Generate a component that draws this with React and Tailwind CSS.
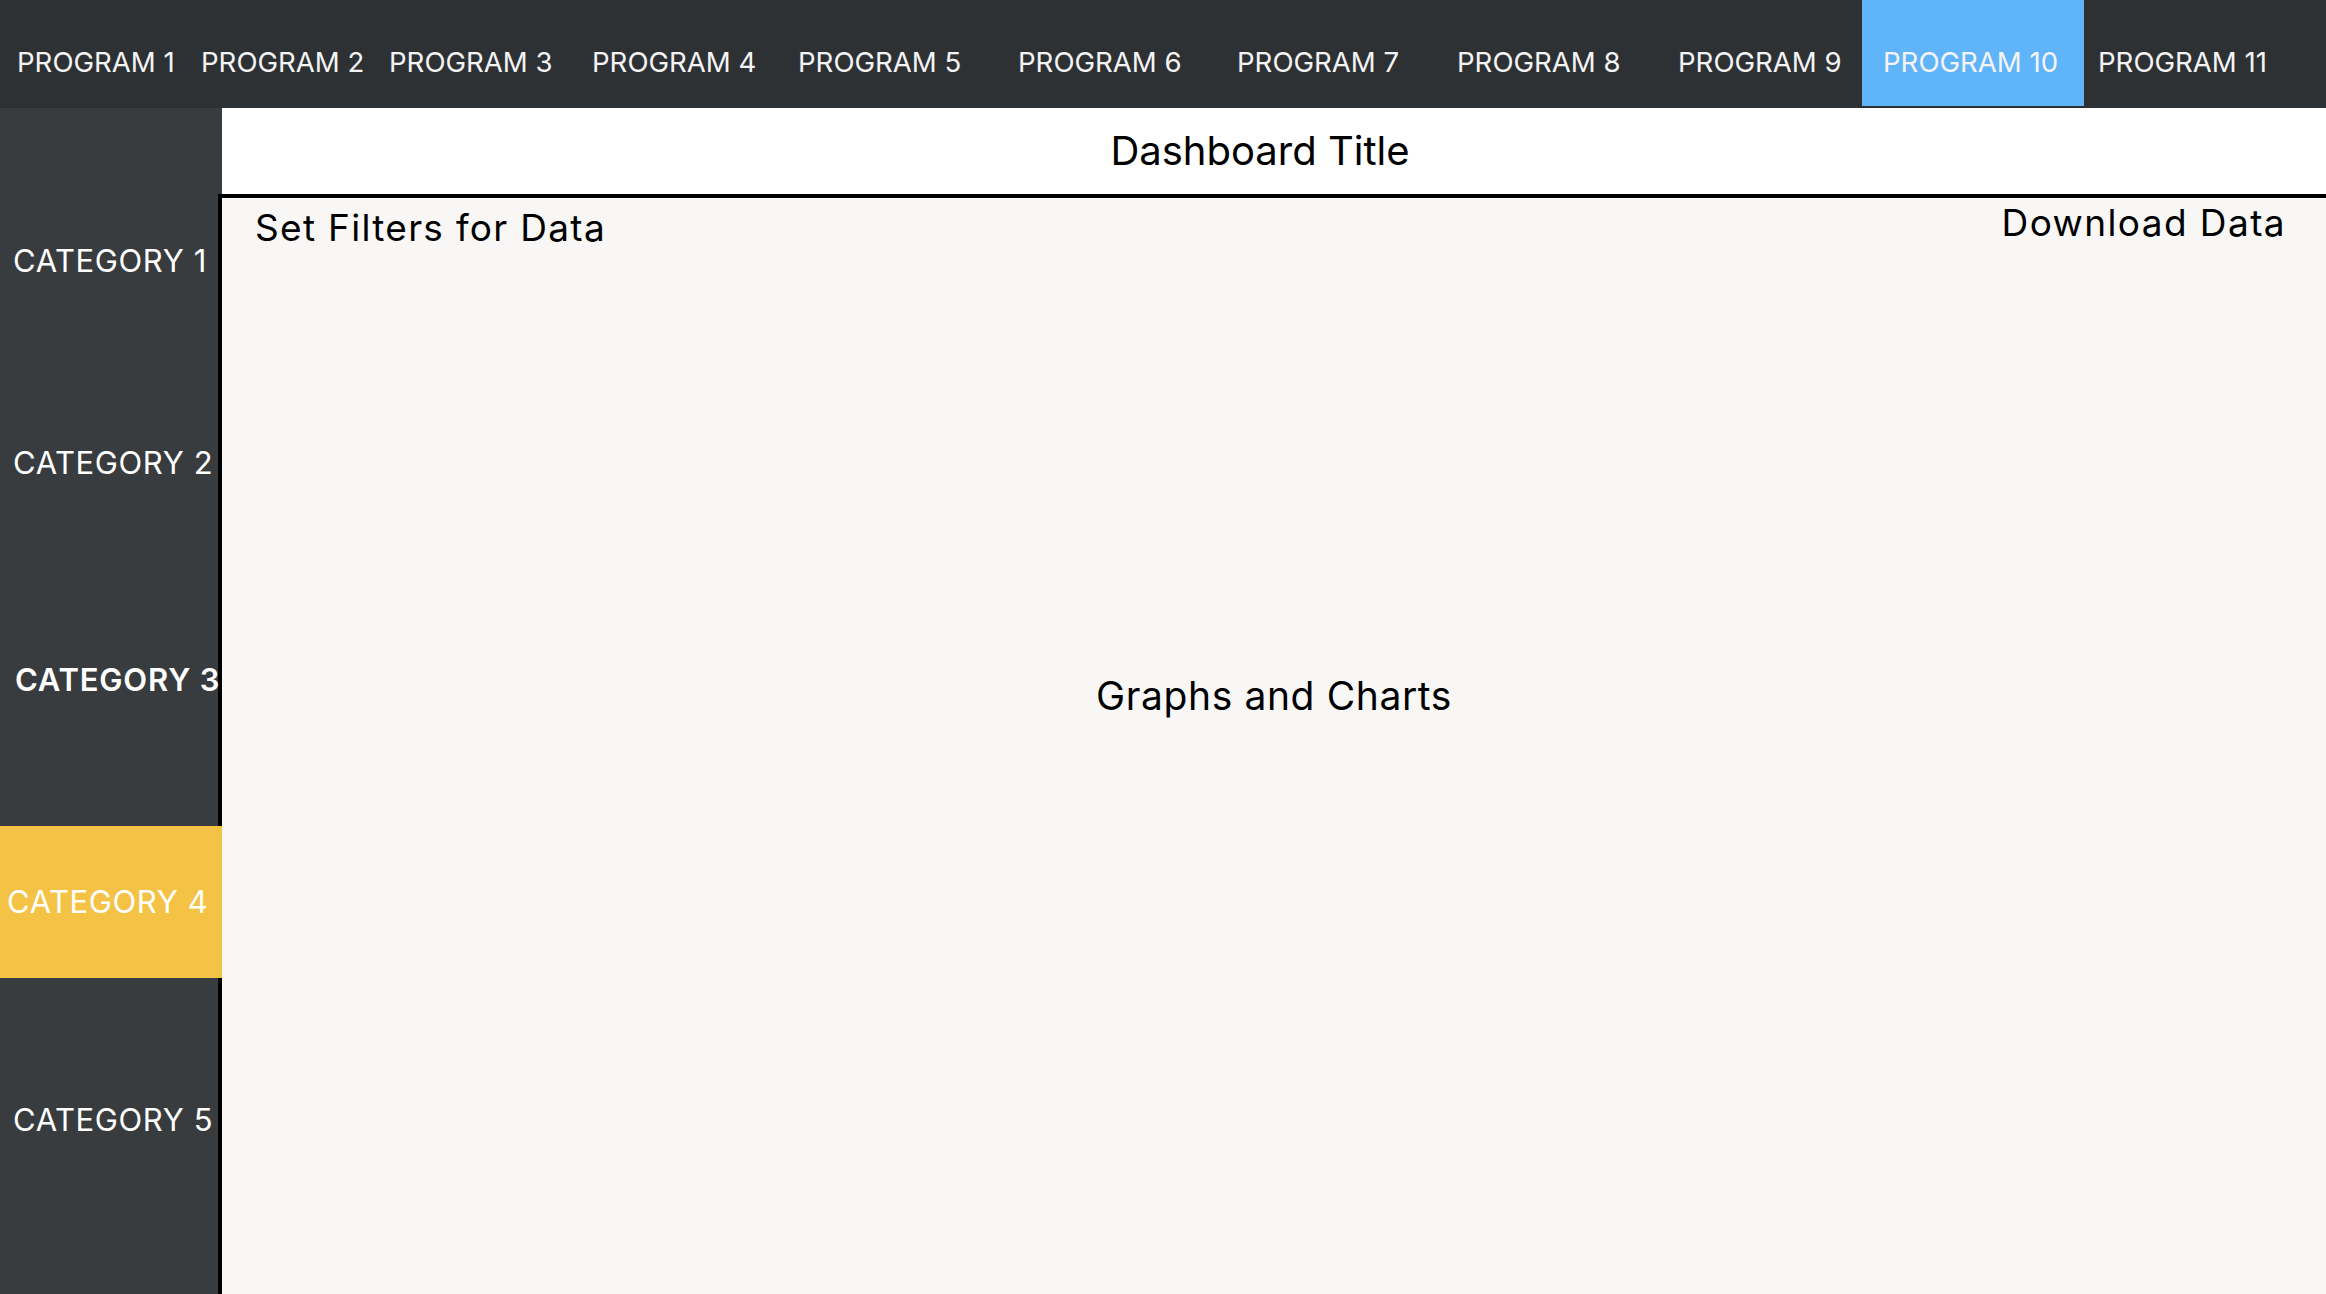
import React from "react";

const programs = [
  { label: "PROGRAM 1", cls: "w-[184px]" },
  { label: "PROGRAM 2", cls: "w-[188px]" },
  { label: "PROGRAM 3", cls: "w-[203px]" },
  { label: "PROGRAM 4", cls: "w-[206px]" },
  { label: "PROGRAM 5", cls: "w-[220px]" },
  { label: "PROGRAM 6", cls: "w-[219px]" },
  { label: "PROGRAM 7", cls: "w-[220px]" },
  { label: "PROGRAM 8", cls: "w-[221px]" },
  { label: "PROGRAM 9", cls: "w-[184px]" },
  { label: "PROGRAM 10", cls: "w-[222px] pl-[21px] bg-[#60b4fa]" },
  { label: "PROGRAM 11", cls: "pl-[14px]" },
];

export default function App() {
  return (
    <div className="w-[2326px] h-[1294px] flex flex-col overflow-hidden font-['Inter','Noto_Sans',sans-serif]">
      <nav className="h-[108px] shrink-0 bg-[#2e3134] flex items-start pl-[17px]">
        {programs.map((p) => (
          <div
            key={p.label}
            className={`h-[106px] flex items-center pt-[18px] text-[27.6px] leading-[34px] text-[#f4f4f4] whitespace-nowrap ${p.cls}`}
          >
            {p.label}
          </div>
        ))}
      </nav>
      <div className="flex flex-1 min-h-0">
        <aside className="w-[222px] shrink-0 bg-[#383c3f] flex flex-col text-[31px] leading-[36px] tracking-[0.6px] text-white whitespace-nowrap">
          <div className="h-[86px] shrink-0" />
          <div className="h-[134px] shrink-0 border-r-4 border-black flex items-center pl-[13px]">
            CATEGORY 1
          </div>
          <div className="h-[270px] shrink-0 border-r-4 border-black flex items-center pl-[13px]">
            CATEGORY 2
          </div>
          <div className="h-[228px] shrink-0 border-r-4 border-black flex items-center pl-[15px] pb-[64px] font-semibold tracking-[0.8px]">
            CATEGORY 3
          </div>
          <div className="h-[152px] shrink-0 bg-[#f4c244] flex items-center pl-[7px]">
            CATEGORY 4
          </div>
          <div className="flex-1 border-r-4 border-black flex items-center pl-[13px] pb-[32px]">
            CATEGORY 5
          </div>
        </aside>
        <main className="flex-1 flex flex-col min-w-0">
          <div className="h-[86px] shrink-0 bg-white flex items-center justify-center pr-[28px] text-[40px] leading-[48px] text-black">
            Dashboard Title
          </div>
          <div className="flex-1 border-t-4 border-black bg-[#f8f7f5] flex flex-col text-black">
            <div className="flex justify-between items-start">
              <div className="pl-[33px] pt-[8px] text-[37px] leading-[44px] tracking-[1.3px]">
                Set Filters for Data
              </div>
              <div className="pr-[40px] pt-[3px] text-[37px] leading-[44px] tracking-[1.4px]">
                Download Data
              </div>
            </div>
            <div className="flex-1 flex items-center justify-center pb-[152px] text-[39px] leading-[46px] tracking-[0.6px]">
              Graphs and Charts
            </div>
          </div>
        </main>
      </div>
    </div>
  );
}
